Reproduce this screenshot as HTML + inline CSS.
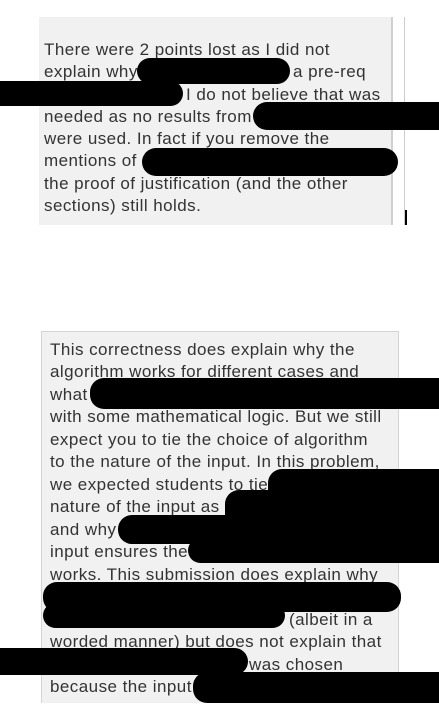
<!DOCTYPE html>
<html><head><meta charset="utf-8"><style>
body{margin:0;width:439px;height:727px;background:#fff;position:relative;overflow:hidden;font-family:"Liberation Sans","DejaVu Sans",sans-serif;}
.box1{position:absolute;left:39px;top:17px;width:352px;height:208px;background:#f1f1f1;border-right:2px solid #d0d0d0;}
.vl{position:absolute;left:404px;top:17px;width:1px;height:208px;background:#ccc;}
.box2{position:absolute;left:41px;top:331px;width:356px;height:371px;background:#f1f1f1;border:1px solid #d4d4d4;border-bottom:none;}
.t{position:absolute;white-space:nowrap;font-size:17px;letter-spacing:0.45px;color:#333;line-height:20px;}
.b{position:absolute;background:#000;border-radius:14px;}
</style></head><body>
<div class="box1"></div><div class="vl"></div>
<div style="position:absolute;left:405px;top:210px;width:2px;height:15px;background:#000"></div>
<div class="t" style="left:44px;top:40px">There were 2 points lost as I did not</div>
<div class="t" style="left:44px;top:62px">explain why</div>
<div class="t" style="left:293px;top:62px">a pre-req</div>
<div class="t" style="left:186px;top:85px">I do not believe that was</div>
<div class="t" style="left:44px;top:107px">needed as no results from</div>
<div class="t" style="left:44px;top:129px">were used. In fact if you remove the</div>
<div class="t" style="left:44px;top:151px">mentions of</div>
<div class="t" style="left:44px;top:174px">the proof of justification (and the other</div>
<div class="t" style="left:44px;top:196px">sections) still holds.</div>
<div class="b" style="left:137px;top:58px;width:153px;height:26px"></div>
<div class="b" style="left:-20px;top:81px;width:203px;height:25px"></div>
<div class="b" style="left:253px;top:102px;width:210px;height:28px"></div>
<div class="b" style="left:142px;top:148px;width:256px;height:28px"></div>

<div class="box2"></div>
<div class="t" style="left:50px;top:340px">This correctness does explain why the</div>
<div class="t" style="left:50px;top:362px">algorithm works for different cases and</div>
<div class="t" style="left:50px;top:385px">what</div>
<div class="t" style="left:50px;top:407px">with some mathematical logic. But we still</div>
<div class="t" style="left:50px;top:430px">expect you to tie the choice of algorithm</div>
<div class="t" style="left:50px;top:452px">to the nature of the input. In this problem,</div>
<div class="t" style="left:50px;top:475px">we expected students to tie</div>
<div class="t" style="left:50px;top:497px">nature of the input as</div>
<div class="t" style="left:50px;top:520px">and why</div>
<div class="t" style="left:50px;top:542px">input ensures the</div>
<div class="t" style="left:50px;top:565px">works. This submission does explain why</div>
<div class="t" style="left:289px;top:610px">(albeit in a</div>
<div class="t" style="left:50px;top:632px">worded manner) but does not explain that</div>
<div class="t" style="left:249px;top:655px">was chosen</div>
<div class="t" style="left:50px;top:677px">because the input</div>
<div class="b" style="left:90px;top:378px;width:370px;height:31px"></div>
<div class="b" style="left:268px;top:469px;width:200px;height:94px"></div>
<div class="b" style="left:225px;top:490px;width:240px;height:40px"></div>
<div class="b" style="left:118px;top:515px;width:340px;height:29px"></div>
<div class="b" style="left:188px;top:538px;width:280px;height:25px"></div>
<div class="b" style="left:43px;top:582px;width:358px;height:30px"></div>
<div class="b" style="left:43px;top:603px;width:242px;height:25px"></div>
<div class="b" style="left:-20px;top:648px;width:268px;height:27px"></div>
<div class="b" style="left:193px;top:672px;width:270px;height:31px"></div>
</body></html>
